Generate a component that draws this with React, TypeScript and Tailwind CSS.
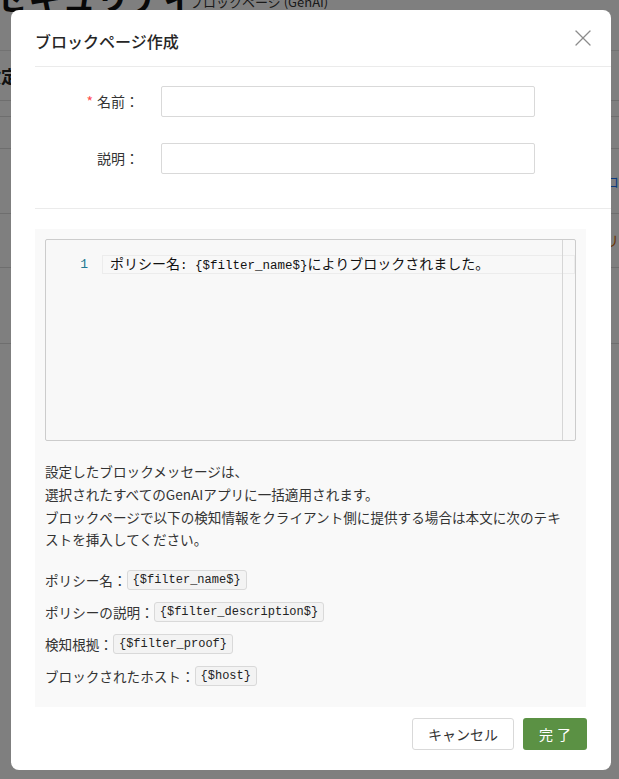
import { X } from "lucide-react";

const jp = "font-['Noto_Sans_CJK_JP',sans-serif]";
const mono = "font-['Liberation_Mono','Noto_Sans_CJK_JP',monospace]";

function Tag({ children }: { children: string }) {
  return (
    <code className={`${mono} inline-block text-[12px] leading-[18px] px-[5px] border border-[#d9d9d9] bg-[#f3f3f3] rounded-[3px] text-[#222]`}>
      {children}
    </code>
  );
}

export default function App() {
  const vars = [
    { label: "ポリシー名：", value: "{$filter_name$}" },
    { label: "ポリシーの説明：", value: "{$filter_description$}" },
    { label: "検知根拠：", value: "{$filter_proof}" },
    { label: "ブロックされたホスト：", value: "{$host}" },
  ];

  return (
    <div className={`${jp} relative w-[619px] h-[779px] overflow-hidden bg-white text-[#222]`}>
      {/* background page */}
      <div className="-mt-[24px] -ml-[6px] text-[34px] font-bold leading-[40px] text-[#111]">セキュリティ</div>
      <div className="absolute left-[190px] top-[-8px] text-[13px] text-[#333]">ブロックページ (GenAI)</div>
      <div className="mt-[34px] border-t border-[#e5e5e5]">
        <div className="h-[50px] border-b border-[#ddd] flex items-center -ml-[16px] font-bold text-[17px]">設定</div>
        <div className="h-[16px] border-b border-[#ddd]" />
        <div className="h-[32px] border-b border-[#ddd]" />
        <div className="h-[65px] border-b border-[#ddd] flex items-center justify-end text-[14px] text-[#1677ff]">ロ</div>
        <div className="h-[54px] border-b border-[#ddd] flex items-center justify-end text-[14px] text-[#d46b08]">リ</div>
        <div className="h-[76px] border-b border-[#ddd]" />
      </div>

      {/* overlay */}
      <div className="absolute inset-0 bg-black/50" />

      {/* modal */}
      <div className="absolute left-[11px] top-[10px] w-[600px] h-[760px] bg-white rounded-[8px] flex flex-col">
        <div className="ml-6 pt-[21px] pb-[14px] border-b border-[#ebebeb]">
          <h2 className="text-[16px] leading-[21px] font-medium text-[#262626]">ブロックページ作成</h2>
        </div>
        <button className="absolute right-[14px] top-[14px] text-[#8c8c8c]" aria-label="close">
          <X size={28} strokeWidth={1.1} />
        </button>

        <div className="ml-6 pt-[19px] pb-[34px] border-b border-[#ebebeb] flex flex-col gap-[26px] text-[14px]">
          <div className="flex items-center">
            <label className="w-[104px] text-right text-[#333]">
              <span className="text-[#ff4d4f] mr-[4px]">*</span>名前：
            </label>
            <input className="ml-[22px] w-[374px] h-[31px] border border-[#d9d9d9] rounded-[2px] bg-white" />
          </div>
          <div className="flex items-center">
            <label className="w-[104px] text-right text-[#333]">説明：</label>
            <input className="ml-[22px] w-[374px] h-[31px] border border-[#d9d9d9] rounded-[2px] bg-white" />
          </div>
        </div>

        <div className="mx-6 mt-[20px] bg-[#f9f9f9] px-[10px] pt-[10px] pb-[20px] w-[551px]">
          <div className="relative h-[202px] border border-[#cccccc] rounded-[2px] bg-[#f8f8f8]">
            <div className="absolute top-0 bottom-0 right-[12px] border-l border-[#d6d6d6]" />
            <div className="flex items-center mt-[15px] h-[19px]">
              <span className="w-[42px] text-right text-[13px] text-[#237893] font-['Liberation_Mono',monospace]">1</span>
              <div className="ml-[14px] flex-1 h-[19px] border border-[#ececec] flex items-center pl-[7px]">
                <span className="text-[14px] leading-[17px] text-[#111] whitespace-nowrap">
                  ポリシー名<span className={`${mono} text-[12.5px]`}>: {"{$filter_name$}"}</span>によりブロックされました。
                </span>
              </div>
            </div>
          </div>

          <p className="mt-[19px] text-[13.6px] leading-[22.8px] text-[#333] whitespace-nowrap">
            設定したブロックメッセージは、
            <br />
            選択されたすべてのGenAIアプリに一括適用されます。
            <br />
            ブロックページで以下の検知情報をクライアント側に提供する場合は本文に次のテキ
            <br />
            ストを挿入してください。
          </p>

          <div className="mt-[18px] flex flex-col gap-[10px] text-[13.6px] text-[#333]">
            {vars.map((v) => (
              <div key={v.value} className="flex items-center h-[22px]">
                <span>{v.label}</span>
                <Tag>{v.value}</Tag>
              </div>
            ))}
          </div>
        </div>

        <div className="flex justify-end gap-[9px] mr-[24px] mt-[11px]">
          <button className="h-[32px] w-[102px] border border-[#d9d9d9] rounded-[3px] bg-white text-[14px] text-[#333]">
            キャンセル
          </button>
          <button className="h-[32px] w-[64px] rounded-[3px] bg-[#5b9144] text-white text-[14px] tracking-[4px] pl-[4px]">
            完了
          </button>
        </div>
      </div>
    </div>
  );
}
